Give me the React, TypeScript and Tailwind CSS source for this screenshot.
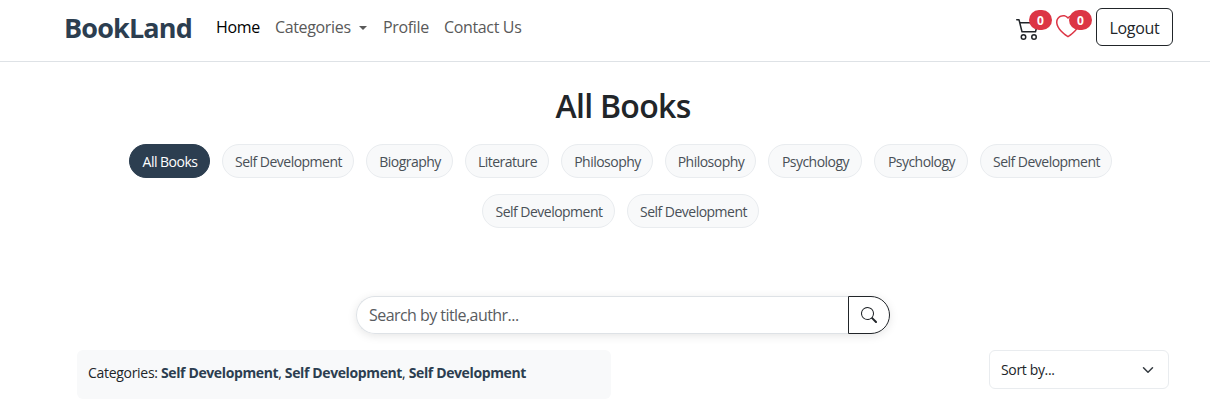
import { BsCart2, BsHeart, BsSearch } from "react-icons/bs";

const categories = [
  { label: "All Books", width: "w-[81px]", active: true },
  { label: "Self Development", width: "w-[132px]" },
  { label: "Biography", width: "w-[87px]" },
  { label: "Literature", width: "w-[84px]" },
  { label: "Philosophy", width: "w-[92px]" },
  { label: "Philosophy", width: "w-[91px]" },
  { label: "Psychology", width: "w-[94px]" },
  { label: "Psychology", width: "w-[94px]" },
  { label: "Self Development", width: "w-[132px]" },
  { label: "Self Development", width: "w-[133px]" },
  { label: "Self Development", width: "w-[132px]" },
];

function Badge() {
  return (
    <span className="absolute -top-[5px] left-[13px] flex h-5 w-[23px] items-center justify-center rounded-full bg-[#dc3545] pt-px text-xs font-bold text-white">
      0
    </span>
  );
}

function Navbar() {
  return (
    <header className="flex h-[62px] items-start border-b border-[#dee2e6] pl-[64px] pr-[37px]">
      <a className="mt-[5px] w-[128px] whitespace-nowrap text-[27px] font-bold leading-[46px] tracking-[-0.85px] text-[#2c3e50]">
        BookLand
      </a>
      <nav className="mt-2 flex whitespace-nowrap pl-6 text-base leading-[39px] tracking-[-0.35px] text-[#595959]">
        <a className="w-[59px] text-black">Home</a>
        <a className="flex w-[108px] items-center">
          <span className="w-[84px]">Categories</span>
          <span className="mt-px border-x-[4.5px] border-t-[4.5px] border-x-transparent border-t-[#595959]" />
        </a>
        <a className="w-[60px]">Profile</a>
        <a className="pl-px">Contact Us</a>
      </nav>
      <div className="ml-auto flex">
        <a className="relative mt-[15px] h-6 w-10 text-[#212529]">
          <BsCart2 size={24} className="mt-px" />
          <Badge />
        </a>
        <a className="relative mt-[15px] h-6 w-10 text-[#dc3545]">
          <BsHeart size={24} />
          <Badge />
        </a>
        <button className="mt-2 h-[38px] w-[77px] rounded-md border border-[#212529] pt-px text-base tracking-[-0.3px] text-[#212529]">
          Logout
        </button>
      </div>
    </header>
  );
}

export default function App() {
  return (
    <div className="h-[415px] w-[1210px] overflow-hidden bg-white font-['Open_Sans',sans-serif] text-[#212529]">
      <Navbar />
      <main className="pl-[77px]">
        <h1 className="mt-6 ml-[46px] w-[1000px] text-center text-[32px] font-semibold leading-[40px] tracking-[-0.7px]">
          All Books
        </h1>
        <div className="mt-[18px] ml-[43px] flex w-[1001px] flex-wrap justify-center gap-x-3 gap-y-4">
          {categories.map((c, i) => (
            <button
              key={i}
              className={`${c.width} h-[34px] shrink-0 whitespace-nowrap rounded-full border pt-[2px] pl-px text-sm tracking-[-0.52px] ${
                c.active
                  ? "border-[#2c3e50] bg-[#2c3e50] text-white"
                  : "border-[#e9ecef] bg-[#f8f9fa] text-[#495057]"
              }`}
            >
              {c.label}
            </button>
          ))}
        </div>
        <form className="mt-[68px] ml-[279px] flex h-[38px] w-[534px] rounded-full shadow-[0_2px_10px_rgba(0,0,0,0.1)]">
          <input
            className="w-[492px] rounded-l-full border border-r-0 border-[#dee2e6] bg-white pl-[12px] text-base tracking-[-0.55px] placeholder:text-[#595c5f]"
            placeholder="Search by title,authr..."
          />
          <button
            type="button"
            className="flex w-[42px] items-center justify-center rounded-r-full border border-[#212529] bg-white pr-px"
          >
            <BsSearch size={16} />
          </button>
        </form>
        <div className="mt-4 flex">
          <p className="h-[49px] w-[534px] whitespace-nowrap rounded-md bg-[#f8f9fa] pl-[11px] text-sm leading-[46px] tracking-[-0.3px]">
            Categories: <strong className="tracking-[-0.38px] text-[#2c3e50]">Self Development</strong>,{" "}
            <strong className="tracking-[-0.38px] text-[#2c3e50]">Self Development</strong>,{" "}
            <strong className="tracking-[-0.38px] text-[#2c3e50]">Self Development</strong>
          </p>
          <button className="ml-[378px] flex h-[39px] w-[180px] items-center justify-between rounded-md border border-[#e9ecef] pl-[11px] pr-[14px] text-sm tracking-[-0.35px]">
            <span className="pt-px">Sort by...</span>
            <svg width="12" height="12" viewBox="0 0 16 16" fill="none" stroke="#343a40" strokeWidth="2" strokeLinecap="round" strokeLinejoin="round">
              <path d="m2 5 6 6 6-6" />
            </svg>
          </button>
        </div>
      </main>
    </div>
  );
}
